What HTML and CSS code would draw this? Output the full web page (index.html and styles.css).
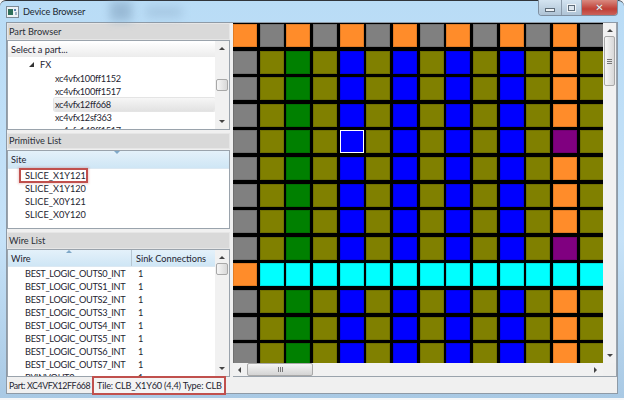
FILE: index.html
```html
<!DOCTYPE html>
<html lang="en">
<head>
    <meta charset="UTF-8">
    <meta name="viewport" content="width=device-width, initial-scale=1.0">
    <title>Device Browser</title>
    <link rel="stylesheet" href="styles.css">
</head>
<body>
    <div class="window">
        <div class="titlebar">
            <svg class="app-icon" width="13" height="12" viewBox="0 0 13 12">
                <rect x="0.5" y="0.5" width="12" height="11" fill="#eef2f6" stroke="#7d8a96"/>
                <rect x="2" y="3" width="5" height="6" fill="#2f6f5a"/>
                <rect x="8" y="3" width="2" height="2" fill="#5a7fb0"/>
                <rect x="9" y="6" width="2" height="3" fill="#9fb3c6"/>
            </svg>
            <span class="title-text">Device Browser</span>
            <div class="smudge"></div>
            <div class="smudge faint"></div>
            <div class="caption-buttons">
                <div class="cap-btn"><span class="min-glyph"></span></div>
                <div class="cap-btn max"><span class="max-glyph"></span></div>
                <div class="cap-btn close"><span class="close-glyph">&#10005;</span></div>
            </div>
        </div>
        <div class="client">
            <div class="main">
                <div class="sidebar">
                    <div class="dock-title">Part Browser</div>
                    <div class="box part-box">
                        <div class="box-content">
                            <div class="select-row">Select a part...</div>
                            <div class="tree-row family"><span class="tree-arrow"></span>FX</div>
                            <div class="tree-row part first-part">xc4vfx100ff1152</div>
                            <div class="tree-row part">xc4vfx100ff1517</div>
                            <div class="tree-row part selected">xc4vfx12ff668</div>
                            <div class="tree-row part">xc4vfx12sf363</div>
                            <div class="tree-row part">xc4vfx140ff1517</div>
                        </div>
                        <div class="vscroll">
                            <span class="arrow up"></span>
                            <div class="track part-track"><div class="thumb small-thumb"></div></div>
                            <span class="arrow down"></span>
                        </div>
                    </div>

                    <div class="dock-title primitive-title">Primitive List</div>
                    <div class="box site-box">
                        <div class="box-content">
                            <div class="col-header"><div class="col wide">Site<span class="sort-mark"></span></div></div>
                            <div class="site-row"><span class="callout">SLICE_X1Y121</span></div>
                            <div class="site-row">SLICE_X1Y120</div>
                            <div class="site-row">SLICE_X0Y121</div>
                            <div class="site-row">SLICE_X0Y120</div>
                        </div>
                    </div>

                    <div class="dock-title wire-title">Wire List</div>
                    <div class="box wire-box">
                        <div class="box-content">
                            <div class="col-header wire-header">
                                <div class="col wire-col">Wire<span class="sort-mark wire-mark"></span></div>
                                <div class="col sink-col">Sink Connections</div>
                            </div>
                            <div id="wireRows"></div>
                        </div>
                        <div class="vscroll">
                            <span class="arrow up"></span>
                            <div class="track"><div class="thumb wire-thumb"></div></div>
                            <span class="arrow down"></span>
                        </div>
                    </div>
                </div>

                <div class="view">
                    <div class="view-row">
                        <div class="canvas"><div class="cells" id="cells"></div></div>
                        <div class="vscroll view-vscroll">
                            <span class="arrow up"></span>
                            <div class="track"><div class="thumb view-vthumb"><span class="grip"></span></div></div>
                            <span class="arrow down"></span>
                        </div>
                    </div>
                    <div class="hscroll">
                        <span class="arrow left"></span>
                        <div class="htrack"><div class="hthumb"><span class="hgrip"></span></div></div>
                        <span class="arrow right"></span>
                        <div class="corner"></div>
                    </div>
                </div>
            </div>
            <div class="statusbar">
                <span class="part-label">Part: XC4VFX12FF668</span>
                <span class="tile-label">Tile: CLB_X1Y60 (4,4) Type: CLB</span>
            </div>
        </div>
    </div>

    <script>
        // Wire list rows
        const wires = ["BEST_LOGIC_OUTS0_INT", "BEST_LOGIC_OUTS1_INT", "BEST_LOGIC_OUTS2_INT", "BEST_LOGIC_OUTS3_INT",
            "BEST_LOGIC_OUTS4_INT", "BEST_LOGIC_OUTS5_INT", "BEST_LOGIC_OUTS6_INT", "BEST_LOGIC_OUTS7_INT", "BYINVOUT0"];
        const wireRows = document.querySelector('#wireRows');
        wires.forEach(name => {
            const row = document.createElement('div');
            row.className = 'wire-row';
            row.innerHTML = `<span class="wire-name">${name}</span><span class="wire-count">1</span>`;
            wireRows.appendChild(row);
        });

        // Tile grid: 14 columns, 13 rows
        const base = ["gray", "olive", "green", "olive", "blue", "olive", "blue", "olive", "blue", "olive", "blue", "olive", "orange", "olive"];
        const cells = document.querySelector('#cells');
        for (let r = 0; r < 13; r++) {
            for (let c = 0; c < 14; c++) {
                let color = base[c];
                if (r === 0) color = c % 2 === 0 ? "orange" : "gray";
                if (r === 9) color = c === 0 ? "orange" : "cyan";
                if ((r === 4 || r === 8) && c === 12) color = "purple";
                const cell = document.createElement('div');
                cell.className = 'cell ' + color;
                if (r === 4 && c === 4) cell.classList.add('current');
                cells.appendChild(cell);
            }
        }
    </script>
</body>
</html>
```

FILE: styles.css
```css
html, body {
    margin: 0;
    padding: 0;
    width: 624px;
    height: 400px;
    overflow: hidden;
    background: #f4f6f8;
}
.window {
    width: 624px;
    height: 398px;
    box-sizing: border-box;
    display: flex;
    flex-direction: column;
    padding: 0 6px 4px 6px;
    background: linear-gradient(#b9dcf6, #c6e2f8 60%, #a9c9e4);
    border-top: 1px solid #30343a;
    border-radius: 6px 6px 0 0;
    font-family: Lato, "Noto Sans", sans-serif;
    font-size: 9.2px;
    color: #1e2430;
}
.titlebar {
    position: relative;
    height: 21px;
    flex: none;
    display: flex;
    align-items: center;
    gap: 4px;
}
.title-text {
    font-size: 9.2px;
    letter-spacing: -0.1px;
    color: #20262e;
}
.smudge {
    position: absolute;
    left: 104px;
    top: 0;
    width: 22px;
    height: 20px;
    background: #7f9fbc;
    opacity: 0.55;
    filter: blur(5px);
}
.smudge.faint {
    left: 140px;
    top: 5px;
    width: 36px;
    height: 12px;
    opacity: 0.3;
}
.caption-buttons {
    position: absolute;
    right: 0;
    top: -1px;
    display: flex;
    height: 15px;
    border: 1px solid #7f8fa0;
    border-top: none;
    border-radius: 0 0 4px 4px;
    overflow: hidden;
}
.cap-btn {
    width: 22px;
    display: flex;
    align-items: center;
    justify-content: center;
    background: linear-gradient(#d4e4f1, #aec3d5);
    border-right: 1px solid #8b9bab;
}
.cap-btn.max {
    width: 19px;
}
.cap-btn.close {
    width: 35px;
    border-right: none;
    background: linear-gradient(#d98a80, #c03f36 60%, #c9625a);
}
.min-glyph {
    width: 8px;
    height: 2px;
    margin-top: 4px;
    background: #eef3f7;
    border: 1px solid #5f6d7a;
}
.max-glyph {
    width: 5px;
    height: 4px;
    background: #dde6ee;
    border: 1px solid #5f6d7a;
    outline: 1px solid #eef3f7;
}
.close-glyph {
    color: #f2f2f2;
    font-family: "DejaVu Sans", sans-serif;
    font-size: 10px;
    font-weight: bold;
    text-shadow: 0 0 1px #555;
}
.client {
    flex: 1;
    min-height: 0;
    display: flex;
    flex-direction: column;
    background: #f0f0f0;
    border: 1px solid #8e9aa6;
}
.main {
    flex: 1;
    min-height: 0;
    display: flex;
}
.sidebar {
    width: 223px;
    flex: none;
    display: flex;
    flex-direction: column;
}
.dock-title {
    height: 15px;
    line-height: 15px;
    padding-left: 1px;
    background: #d9d9d9;
    border: 1px solid #e6e6e6;
    color: #2a2f36;
}
.primitive-title {
    margin-top: 3px;
    height: 14px;
    line-height: 14px;
}
.wire-title {
    margin-top: 3px;
}
.box {
    display: flex;
    background: #fff;
    border: 1px solid #9aa3ac;
    overflow: hidden;
}
.box-content {
    flex: 1;
    min-width: 0;
}
.part-box {
    height: 88px;
}
.site-box {
    height: 77px;
    margin-top: 1px;
}
.wire-box {
    flex: 1;
    min-height: 0;
}
.select-row {
    height: 14px;
    line-height: 14px;
    margin-top: 2px;
    padding-left: 3px;
    background: linear-gradient(#fdfdfd, #ececec);
}
.tree-row {
    height: 13px;
    line-height: 13px;
    white-space: nowrap;
}
.family {
    padding-left: 21px;
    margin-top: 1px;
    display: flex;
    align-items: center;
    gap: 6px;
}
.tree-arrow {
    width: 0;
    height: 0;
    border-left: 5px solid transparent;
    border-bottom: 5px solid #333;
}
.part {
    padding-left: 47px;
    letter-spacing: -0.3px;
}
.first-part {
    margin-top: 1px;
}
.selected {
    margin-left: 46px;
    padding-left: 1px;
    background: linear-gradient(#f6f6f6, #e2e2e2);
    border-radius: 2px;
    box-shadow: 0 0 0 1px #e4e4e4;
}
.col-header {
    display: flex;
    height: 17px;
    line-height: 17px;
    background: linear-gradient(#e4f1fa, #cfe6f5);
    border-bottom: 1px solid #dbe8f2;
    white-space: nowrap;
}
.wire-header {
    height: 16px;
}
.col {
    position: relative;
    padding-left: 3px;
    flex: 1;
}
.wire-col {
    flex: none;
    width: 120px;
    border-right: 1px solid #b6c6d2;
}
.sink-col {
    padding-left: 4px;
    min-width: 0;
}
.sort-mark {
    position: absolute;
    left: 106px;
    top: 0;
    width: 0;
    height: 0;
    border-left: 3px solid transparent;
    border-right: 3px solid transparent;
    border-top: 3px solid #7fa8c8;
}
.wire-mark {
    left: 58px;
    border-top: none;
    border-bottom: 3px solid #7fa8c8;
}
.site-row {
    height: 13px;
    line-height: 13px;
    padding-left: 17px;
}
.callout {
    display: inline-block;
    line-height: 11px;
    box-shadow: 0 0 0 2px #c0504d, 0 0 2px 3px rgba(192, 80, 77, 0.25);
    padding: 0 0 0 4px;
    margin-left: -4px;
    background: #fff;
}
.wire-row {
    display: flex;
    height: 13px;
    line-height: 13px;
    white-space: nowrap;
}
.wire-name {
    width: 124px;
    padding-left: 17px;
    box-sizing: border-box;
    letter-spacing: -0.3px;
}
.wire-count {
    padding-left: 6px;
}
.vscroll {
    width: 14px;
    flex: none;
    display: flex;
    flex-direction: column;
    align-items: center;
    background: #f1f1f1;
}
.track {
    flex: 1;
    width: 100%;
}
.part-track {
    display: flex;
    align-items: center;
}
.thumb {
    box-sizing: border-box;
    margin: 0 1px;
    background: linear-gradient(90deg, #f6f6f6, #d8d8d8);
    border: 1px solid #a8a8a8;
    border-radius: 2px;
}
.small-thumb {
    flex: 1;
    height: 12px;
}
.wire-thumb {
    height: 12px;
    margin-top: 0;
}
.arrow {
    flex: none;
    width: 0;
    height: 0;
}
.arrow.up {
    margin: 6px 0 4px;
    border-left: 3px solid transparent;
    border-right: 3px solid transparent;
    border-bottom: 3px solid #444;
}
.arrow.down {
    margin: 4px 0 6px;
    border-left: 3px solid transparent;
    border-right: 3px solid transparent;
    border-top: 3px solid #444;
}
.view {
    flex: 1;
    min-width: 0;
    margin-left: 3px;
    display: flex;
    flex-direction: column;
    border-right: 1px solid #9aa3ac;
    border-bottom: 1px solid #9aa3ac;
}
.view-row {
    flex: 1;
    min-height: 0;
    display: flex;
}
.canvas {
    flex: 1;
    min-width: 0;
    background: #000;
    overflow: hidden;
}
.cells {
    display: grid;
    grid-template-columns: repeat(14, 24px);
    grid-auto-rows: 23px;
    gap: 3.6px 2.67px;
    padding: 1px 0 0 0;
}
.cell {
    box-sizing: border-box;
    border: 1px solid rgba(0, 0, 0, 0.12);
}
.gray { background: #808080; }
.olive { background: #808000; }
.green { background: #008000; }
.blue { background: #0000ff; }
.orange { background: #ff8c2a; }
.cyan { background: #00ffff; }
.purple { background: #800080; }
.cell.current {
    border: 1px solid #fff;
}
.view-vscroll {
    width: 13px;
}
.view-vthumb {
    height: 50px;
    display: flex;
    align-items: center;
    justify-content: center;
}
.grip {
    width: 5px;
    height: 5px;
    background: repeating-linear-gradient(#777 0 1px, transparent 1px 2px);
}
.hscroll {
    height: 13px;
    flex: none;
    display: flex;
    align-items: center;
    background: #f1f1f1;
}
.arrow.left {
    margin: 0 6px 0 5px;
    border-top: 3px solid transparent;
    border-bottom: 3px solid transparent;
    border-right: 3px solid #444;
}
.arrow.right {
    margin: 0 6px 0 4px;
    border-top: 3px solid transparent;
    border-bottom: 3px solid transparent;
    border-left: 3px solid #444;
}
.htrack {
    flex: 1;
    height: 100%;
}
.hthumb {
    box-sizing: border-box;
    width: 66px;
    height: 100%;
    display: flex;
    align-items: center;
    justify-content: center;
    background: linear-gradient(#f4f4f4, #d4d4d4);
    border: 1px solid #a8a8a8;
    border-radius: 2px;
}
.hgrip {
    width: 5px;
    height: 5px;
    background: repeating-linear-gradient(90deg, #777 0 1px, transparent 1px 2px);
}
.corner {
    width: 13px;
    height: 100%;
    background: #f0f0f0;
}
.statusbar {
    height: 16px;
    flex: none;
    display: flex;
    align-items: center;
    padding-left: 2px;
}
.part-label {
    width: 82px;
    flex: none;
    white-space: nowrap;
    font-size: 8.8px;
    letter-spacing: -0.4px;
}
.tile-label {
    margin-left: 3px;
    padding: 0 2px 0 3px;
    line-height: 15px;
    white-space: nowrap;
    letter-spacing: -0.2px;
    box-shadow: 0 0 0 2px #c0504d;
    background: #f4f4f4;
}
```
